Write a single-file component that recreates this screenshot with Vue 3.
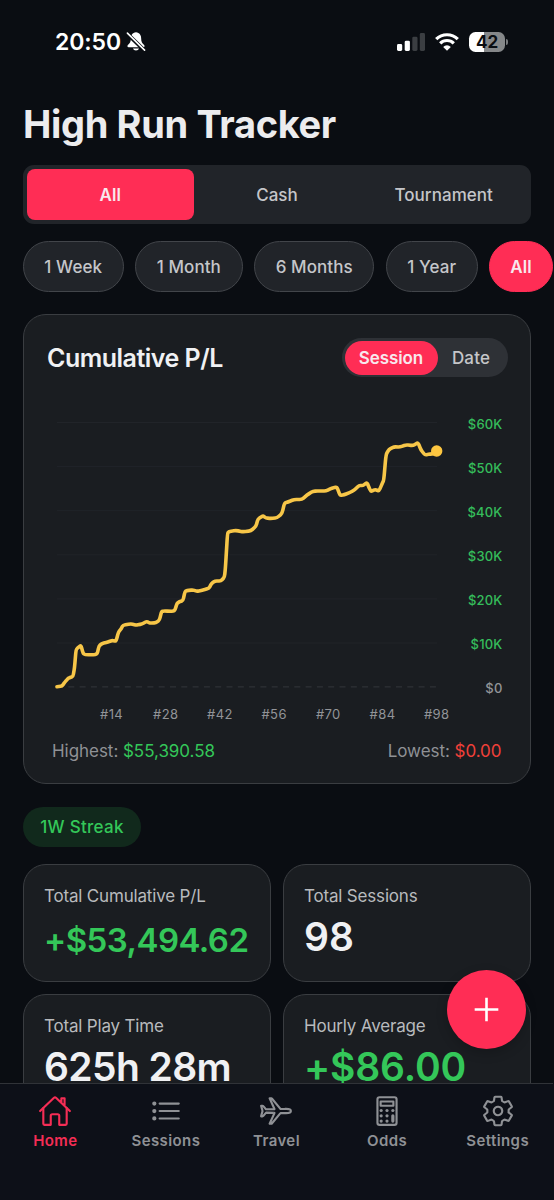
<script setup>
const periods = ['1 Week', '1 Month', '6 Months', '1 Year', 'All']
const yTicks = ['$60K', '$50K', '$40K', '$30K', '$20K', '$10K', '$0']
const xTicks = ['#14', '#28', '#42', '#56', '#70', '#84', '#98']
const stats = [
  { label: 'Total Cumulative P/L', value: '+$53,494.62', kind: 'gain fit' },
  { label: 'Total Sessions', value: '98', kind: '' },
  { label: 'Total Play Time', value: '625h 28m', kind: 'time' },
  { label: 'Hourly Average', value: '+$86.00', kind: 'gain' },
]
const tabs = ['Home', 'Sessions', 'Travel', 'Odds', 'Settings']

// Running total, in chart units: x 0-380 across, y 0-265 down ($60K to $0).
const points = [
  [0, 264.7], [5, 264], [8, 260], [11, 256.5], [13, 255.5], [16, 254.5], [17.5, 246], [19, 228], [21, 225.5], [24, 223.5],
  [26, 231], [28, 232.8], [40, 232.8], [42, 224], [45, 221.5], [51, 220], [55, 218.5], [59, 219.2], [61.5, 210],
  [64, 207], [66, 203.3], [74, 201.8], [79, 203.2], [85, 202], [89.5, 199.5], [93, 201], [99, 200.8], [102.5, 198],
  [104.5, 189.5], [107, 189], [117.5, 189.4], [120, 181.5], [122, 180], [126, 178.5], [128, 169.5], [130, 168.5],
  [136, 168], [140, 169.3], [146, 168], [152, 166.2], [154.5, 161.5], [158, 159], [164, 159], [167.5, 155],
  [168.5, 145], [170.5, 111.5], [172, 109.5], [179, 108.5], [186, 109.8], [194, 108.8], [199, 104], [201, 97],
  [206, 93.8], [209, 96], [214, 96.5], [220, 95.8], [225, 91.5], [227.5, 81], [231, 80], [237, 77.5], [245, 77.5],
  [250, 73], [256, 69.2], [263, 69], [269, 69], [275, 66], [280, 65], [283, 73.5], [287, 72.8], [294, 70],
  [298, 67.5], [302, 63.5], [306, 63.5], [310, 60.5], [312, 65.5], [314, 69.5], [318, 67.5], [322, 69], [325, 62],
  [326.8, 58], [329, 32.5], [332, 27.5], [337, 24.8], [343, 25], [349, 22.8], [356, 23.6], [361, 20.5], [364, 28],
  [368, 33], [373, 32], [380, 31.5],
]
// Slightly softens each corner: straight runs joined by short curves.
const line = points
  .map(([x, y], i) => {
    if (i === 0) return `M${x} ${y}`
    const next = points[i + 1]
    if (!next) return `L${x} ${y}`
    const [px, py] = points[i - 1]
    const k = 0.3
    return `L${x + (px - x) * k} ${y + (py - y) * k} Q${x} ${y} ${x + (next[0] - x) * k} ${y + (next[1] - y) * k}`
  })
  .join(' ')
</script>

<template>
  <div class="screen">
    <div class="statusbar">
      <span class="clock">20:50</span>
      <svg class="bell" viewBox="0 0 20 22">
        <path d="M10 1.2c-3.8.6-5.4 3-5.4 6.3 0 4-1.2 5.4-3.1 7.2-.9.9-.5 2.3.8 2.3h15.4c1.3 0 1.700-1.400.8-2.300-1.900-1.800-3.100-3.200-3.100-7.200 0-3.300-1.600-5.700-5.400-6.300z" fill="#fff" />
        <path d="M6.800 18.300h6.400a3.300 2.700 0 0 1-6.400 0z" fill="#fff" />
        <path d="M.5 2.500 19 20.500" stroke="#0a0d12" stroke-width="4" />
        <path d="M1 2.200 19 20" stroke="#fff" stroke-width="1.700" stroke-linecap="round" />
      </svg>
      <div class="phone-status">
        <svg class="signal" viewBox="0 0 28 18">
          <rect x="0" y="11" width="5.200" height="7" rx="1.400" fill="#fff" />
          <rect x="7.700" y="7.700" width="5.200" height="10.300" rx="1.400" fill="#fff" />
          <rect x="15.300" y="3.700" width="5.200" height="14.300" rx="1.400" fill="#3b3e42" />
          <rect x="22.800" y="0" width="5.200" height="18" rx="1.400" fill="#3b3e42" />
        </svg>
        <svg class="wifi" viewBox="0 0 24 18">
          <g fill="none" stroke="#fff" stroke-width="3.200">
            <path d="M1.200 6.200a15.300 15.300 0 0 1 21.600 0" />
            <path d="M5.200 10.300a9.600 9.600 0 0 1 13.600 0" />
          </g>
          <path d="M12 17.800 8.200 13.900a5.400 5.400 0 0 1 7.600 0z" fill="#fff" />
        </svg>
        <div class="battery"><span>42</span></div>
      </div>
    </div>

    <h1>High Run Tracker</h1>

    <div class="segments">
      <div class="segment on">All</div>
      <div class="segment">Cash</div>
      <div class="segment">Tournament</div>
    </div>

    <div class="periods">
      <div v-for="(p, i) in periods" :key="p" class="chip" :class="['c' + i, { on: i === 4 }]">{{ p }}</div>
    </div>

    <section class="chart-card">
      <header>
        <h2>Cumulative P/L</h2>
        <div class="toggle"><span class="on">Session</span><span class="off">Date</span></div>
      </header>
      <div class="chart">
        <svg class="plot" viewBox="0 0 380 265">
          <path v-for="n in 6" :key="n" :d="`M0 ${(n - 1) * 44.1 + 0.5}H380`" stroke="#212429" stroke-width="1" />
          <path d="M0 264.900H380" stroke="#34373b" stroke-width="1" stroke-dasharray="6 5.300" />
          <path :d="line" fill="none" stroke="#f7c648" stroke-width="3.600" stroke-linejoin="round" stroke-linecap="round" />
          <circle cx="379.700" cy="29" r="5.700" fill="#fdc640" />
        </svg>
        <div class="y-axis"><span v-for="t in yTicks" :key="t" :class="{ zero: t === '$0' }">{{ t }}</span></div>
      </div>
      <div class="x-axis"><span v-for="t in xTicks" :key="t">{{ t }}</span></div>
      <footer>
        <div>Highest: <b class="up">$55,390.58</b></div>
        <div>Lowest: <b class="down">$0.00</b></div>
      </footer>
    </section>

    <div class="streak">1W Streak</div>

    <div class="stats">
      <div v-for="s in stats" :key="s.label" class="stat">
        <div class="label">{{ s.label }}</div>
        <div class="value" :class="s.kind">{{ s.value }}</div>
      </div>
    </div>

    <button class="add" aria-label="Add">
      <svg viewBox="0 0 26 26"><path d="M13 .7v24.600M.7 13h24.600" stroke="#fff" stroke-width="2.700" /></svg>
    </button>

    <nav>
      <div v-for="t in tabs" :key="t" class="tab" :class="{ on: t === 'Home' }">
        <svg viewBox="0 0 512 512" fill="none" stroke="currentColor" stroke-width="32" stroke-linecap="round" stroke-linejoin="round">
          <template v-if="t === 'Home'">
            <path d="M80 212v236a16 16 0 0016 16h96V328a24 24 0 0124-24h80a24 24 0 0124 24v136h96a16 16 0 0016-16V212" />
            <path d="M480 256L266.890 52c-5-5.280-16.690-5.340-21.780 0L32 256M400 179V64h-48v69" />
          </template>
          <template v-else-if="t === 'Sessions'">
            <path d="M160 144h288M160 256h288M160 368h288" />
            <circle cx="80" cy="144" r="16" /><circle cx="80" cy="256" r="16" /><circle cx="80" cy="368" r="16" />
          </template>
          <path v-else-if="t === 'Travel'" d="M407.720 224c-3.400 0-14.790.1-18 .3l-64.900 1.700a1.830 1.830 0 01-1.690-.9L193.550 67.560a9 9 0 00-6.660-3.560H160l73 161a2.350 2.350 0 01-2.260 3.350l-121.690 1.800a8.060 8.060 0 01-6.600-3.100l-37-45c-3-3.900-8.620-6-13.510-6H33.080c-1.290 0-1.100 1.210-.75 2.430L52.170 249.900a16.300 16.300 0 010 11.900L32.310 333c-.59 1.950-.52 3 1.770 3H52c8.140 0 9.250-1.060 13.410-6.300l37.700-45.700a8.190 8.190 0 016.600-3.100l120.680 2.700a2.700 2.700 0 012.430 3.740L160 448h26.640a9 9 0 006.650-3.550L323.140 287c.39-.6 2-.9 2.690-.9l63.900 1.700c3.300.2 14.590.3 18 .3C452 288.100 480 275.930 480 256s-27.880-32-72.280-32z" />
          <template v-else-if="t === 'Odds'">
            <rect x="112" y="48" width="288" height="416" rx="32" />
            <path d="M160 112h192v64H160z" />
            <g fill="currentColor" stroke="none">
              <circle cx="168" cy="248" r="24" /><circle cx="256" cy="248" r="24" /><circle cx="344" cy="248" r="24" />
              <circle cx="168" cy="328" r="24" /><circle cx="256" cy="328" r="24" />
              <circle cx="168" cy="408" r="24" /><circle cx="256" cy="408" r="24" />
              <rect x="320" y="304" width="48" height="128" rx="24" />
            </g>
          </template>
          <path v-else d="M262.290 192.310a64 64 0 1057.400 57.400 64.130 64.130 0 00-57.400-57.400zM416.390 256a154.340 154.340 0 01-1.530 20.790l45.210 35.460a10.810 10.810 0 012.450 13.750l-42.770 74a10.810 10.810 0 01-13.140 4.590l-44.900-18.080a16.110 16.110 0 00-15.170 1.750A164.480 164.480 0 01325 400.800a15.940 15.940 0 00-8.820 12.140l-6.730 47.890a11.080 11.080 0 01-10.680 9.170h-85.540a11.110 11.110 0 01-10.690-8.870l-6.720-47.820a16.070 16.070 0 00-9-12.220 155.300 155.300 0 01-21.460-12.570 16 16 0 00-15.110-1.710l-44.890 18.070a10.810 10.810 0 01-13.140-4.580l-42.770-74a10.800 10.800 0 012.450-13.750l38.210-30a16.050 16.050 0 006-14.080c-.36-4.170-.58-8.330-.58-12.500s.21-8.270.58-12.350a16 16 0 00-6.070-13.940l-38.190-30A10.810 10.810 0 0149.480 186l42.770-74a10.810 10.810 0 0113.140-4.590l44.900 18.080a16.110 16.110 0 0015.170-1.750A164.480 164.480 0 01187 111.200a15.940 15.940 0 008.820-12.140l6.730-47.890A11.080 11.080 0 01213.230 42h85.540a11.110 11.110 0 0110.690 8.870l6.720 47.820a16.070 16.070 0 009 12.220 155.300 155.300 0 0121.460 12.570 16 16 0 0015.110 1.710l44.890-18.070a10.810 10.810 0 0113.140 4.580l42.770 74a10.800 10.800 0 01-2.450 13.750l-38.210 30a16.050 16.050 0 00-6.050 14.080c.33 4.140.55 8.300.55 12.470z" />
        </svg>
        <span>{{ t }}</span>
      </div>
    </nav>
  </div>
</template>

<style>
body { background: #0a0d12; }
</style>

<style scoped>
* { box-sizing: border-box; }
.screen {
  position: relative;
  width: 554px;
  height: 1200px;
  overflow: hidden;
  padding: 0 23px;
  background: #0a0d12;
  color: #f0f1f3;
  font-family: Inter, "Liberation Sans", sans-serif;
  white-space: nowrap;
}
.statusbar { display: flex; align-items: center; height: 83px; padding: 0 26px 0 32px; color: #fff; }
.clock { width: 71px; font-size: 23px; font-weight: 600; letter-spacing: -0.100px; }
.bell { width: 20px; height: 21px; }
.phone-status { display: flex; align-items: center; margin-left: auto; }
.signal { width: 28px; height: 18px; margin-right: 10px; }
.wifi { width: 24px; height: 18px; margin-right: 10px; }
.battery {
  position: relative;
  width: 36px;
  height: 20px;
  border-radius: 6.500px;
  background: linear-gradient(90deg, #fff 43%, #858789 43%);
  color: #0a0d12;
  font-size: 17px;
  font-weight: 700;
  line-height: 20px;
  text-align: center;
}
.battery::after { content: ""; position: absolute; left: 37px; top: 7px; width: 2px; height: 6px; border-radius: 0 2px 2px 0; background: #77797c; }
h1 { margin: 17px 0 0; height: 65px; line-height: 48px; font-size: 38px; font-weight: 700; letter-spacing: -0.350px; color: #ececee; }
.segments { display: grid; grid-template-columns: repeat(3, 1fr); height: 59px; padding: 4px; border-radius: 11px; background: #212429; }
.segment { display: flex; align-items: center; justify-content: center; border-radius: 8px; font-size: 17px; font-weight: 500; letter-spacing: 0.050px; color: #c5c6c9; }
.segment.on { background: #ff2d55; color: #f8e8ed; font-weight: 600; }
.periods { display: flex; gap: 11.300px; width: 540px; margin-top: 17px; }
.chip { display: flex; flex: none; align-items: center; justify-content: center; height: 51px; border: 1px solid #42454a; border-radius: 26px; background: #212429; font-size: 17px; font-weight: 500; letter-spacing: 0.100px; color: #c5c6c9; }
.c0 { width: 100.500px; }
.c1 { width: 108px; }
.c2 { width: 120.300px; }
.c3 { width: 92px; }
.c4 { width: 64px; }
.chip.on { border-color: #ff2d55; background: #ff2d55; color: #f8e8ed; font-weight: 600; }
.chart-card { height: 470px; margin-top: 22px; padding: 23px 22.500px 0 23px; border: 1px solid #3a3d41; border-radius: 23px; background: #1a1d21; }
header { display: flex; align-items: center; justify-content: space-between; height: 39px; }
h2 { margin: 0; font-size: 25px; font-weight: 600; letter-spacing: -0.500px; }
.toggle { display: flex; align-items: center; width: 166px; height: 39px; padding: 0 3px; border-radius: 20px; background: #2e3136; font-size: 17px; font-weight: 500; color: #c5c6c9; }
.toggle span { display: flex; align-items: center; justify-content: center; height: 34px; border-radius: 17px; }
.toggle .on { width: 93px; background: #ff2d55; color: #f8e8ed; font-weight: 600; letter-spacing: -0.100px; }
.toggle .off { width: 67px; letter-spacing: 0.150px; }
.chart { display: flex; margin: 45px 5px 0 10.300px; }
.plot { flex: none; width: 380px; height: 265px; overflow: visible; }
.y-axis { flex: 1; margin-top: -20.100px; text-align: right; font-size: 13px; font-weight: 500; letter-spacing: 0.200px; color: #35bd5b; }
.y-axis span { display: block; height: 44.100px; line-height: 44.100px; }
.y-axis .zero { color: #929498; }
.x-axis { display: flex; width: 380px; margin: -5.500px 0 0 37.500px; font-size: 13px; line-height: 18px; letter-spacing: 0.400px; color: #929498; }
.x-axis span { width: 54.200px; text-align: center; }
footer { display: flex; justify-content: space-between; margin: 15.500px 6px 0 5px; font-size: 17px; line-height: 24px; letter-spacing: -0.040px; color: #8f9195; }
footer b { font-weight: 400; }
.up { color: #34c759; }
.down { color: #ef4039; }
.streak { display: flex; align-items: center; justify-content: center; width: 118px; height: 40px; margin-top: 23px; border-radius: 20px; background: #11291c; color: #34c759; font-size: 17px; font-weight: 500; letter-spacing: 0.300px; }
.stats { display: grid; grid-template-columns: repeat(2, minmax(0, 1fr)); gap: 12px; margin-top: 17px; }
.stat { height: 118px; padding: 19px 20px 0; border: 1px solid #3a3d41; border-radius: 23px; background: #1a1d21; }
.label { height: 24px; line-height: 24px; font-size: 17px; letter-spacing: -0.180px; color: #b8babd; }
.value { margin-top: 5px; font-size: 39px; font-weight: 600; line-height: 48px; }
.gain { color: #34c759; letter-spacing: -0.150px; }
.time { letter-spacing: -0.600px; }
.fit { font-size: 33px; line-height: 55px; letter-spacing: -0.550px; }
.add { position: absolute; left: 447px; top: 970px; display: flex; align-items: center; justify-content: center; width: 79px; height: 79px; padding: 0; border: 0; border-radius: 50%; background: #ff2d55; box-shadow: 0 4px 12px rgba(0, 0, 0, 0.200); }
.add svg { width: 25px; height: 25px; }
nav { position: absolute; left: 0; top: 1083px; display: grid; grid-template-columns: repeat(5, 1fr); width: 553px; height: 117px; padding-top: 10px; border-top: 1px solid #303338; background: #0d1018; box-shadow: 1px 0 0 #0d1018; }
.tab { display: flex; flex-direction: column; align-items: center; color: #8f9195; font-size: 15px; font-weight: 600; line-height: 20px; letter-spacing: 0.400px; }
.tab svg { width: 34px; height: 34px; margin-bottom: 3px; }
.tab.on { color: #f52d55; }
</style>
